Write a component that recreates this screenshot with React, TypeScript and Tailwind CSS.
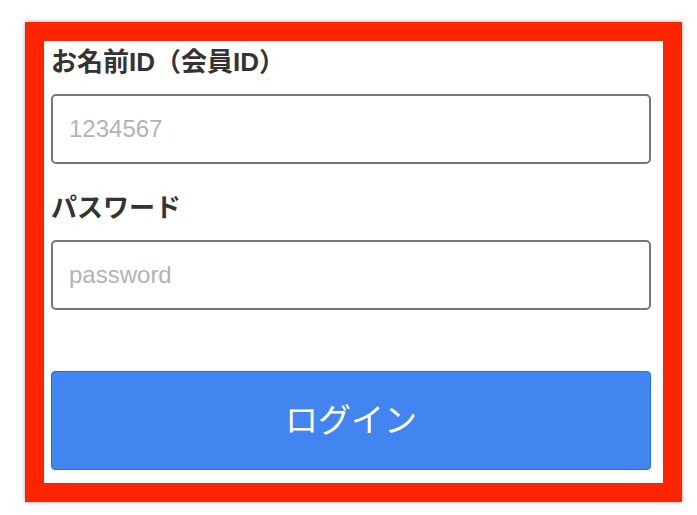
export default function App() {
  return (
    <div className="min-h-[515px] w-[697px] bg-white pl-[25px] pt-[22px] font-['Liberation_Sans','Noto_Sans_CJK_JP',sans-serif]">
      <div className="flex h-[480px] w-[657px] flex-col border-[19px] border-[#ff2400] bg-white pl-[7px] pr-[12px] pt-[7px] shadow-[0_0_4px_rgba(0,0,0,0.35)]">
        <label className="text-[26px] font-bold leading-[29px] text-[#333]">お名前ID（会員ID）</label>
        <input
          type="text"
          placeholder="1234567"
          className="mt-[17px] h-[70px] w-full rounded-[5px] border-2 border-[#777] px-[16px] text-[24px] text-[#333] outline-none placeholder:text-[#b3b3b3]"
        />
        <label className="mt-[30px] text-[26px] font-bold leading-[29px] text-[#333]">パスワード</label>
        <input
          type="password"
          placeholder="password"
          className="mt-[17px] h-[70px] w-full rounded-[5px] border-2 border-[#777] px-[16px] text-[24px] text-[#333] outline-none placeholder:text-[#b3b3b3]"
        />
        <button className="mt-[61px] h-[99px] w-full rounded-[4px] border border-[#1f6ff0] bg-[#4285f0] text-[33px] text-white">
          ログイン
        </button>
      </div>
    </div>
  );
}
